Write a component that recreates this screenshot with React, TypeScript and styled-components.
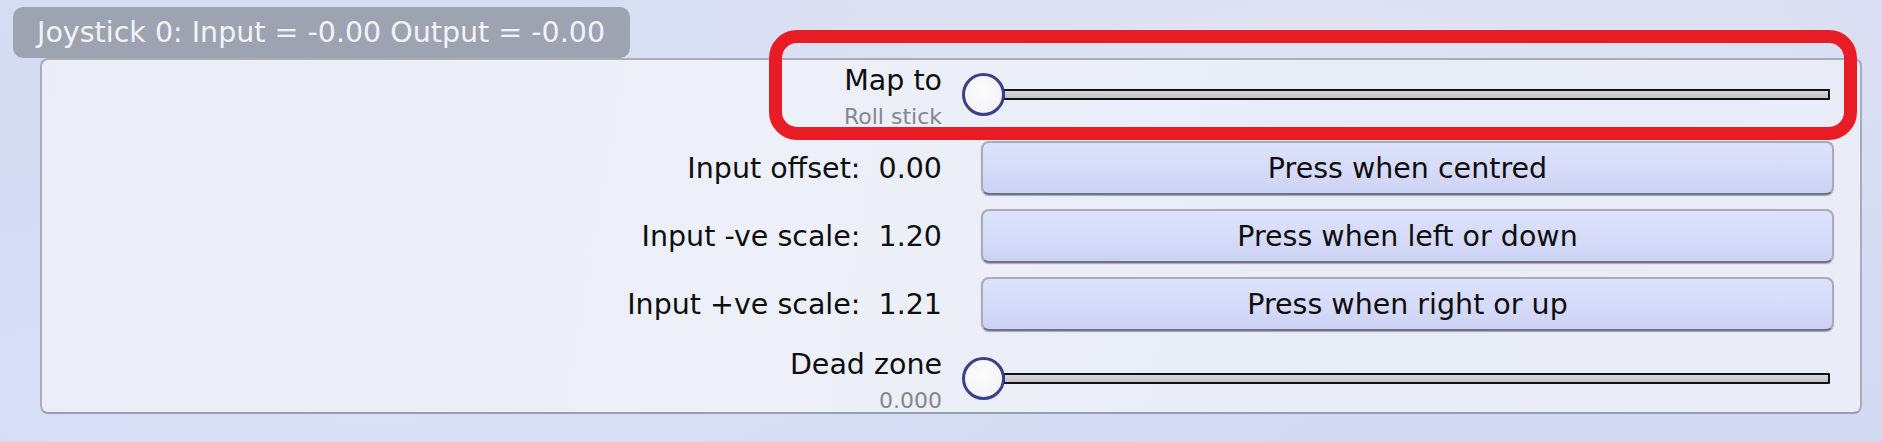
import React, { FC } from 'react';
import styled, { createGlobalStyle } from 'styled-components';

const GlobalStyle = createGlobalStyle`
  html,
  body {
    margin: 0;
    padding: 0;
  }
  body {
    width: 1882px;
    height: 442px;
    overflow: hidden;
    font-family: 'DejaVu Sans', 'Liberation Sans', sans-serif;
    background: radial-gradient(ellipse at 20% 90%, #d9e1f7 0%, rgba(217, 225, 247, 0) 45%),
      radial-gradient(ellipse at 70% 10%, #dfe3f2 0%, rgba(223, 227, 242, 0) 50%),
      linear-gradient(180deg, #d6ddf2 0%, #d3daf1 60%, #d2daf3 100%);
  }
`;

const Page = styled.div`
  position: relative;
  padding: 7px 20px 0 13px;
`;

const TitleTab = styled.div`
  width: 617px;
  height: 51px;
  box-sizing: border-box;
  padding-left: 24px;
  border-radius: 10px;
  background: #9ea3b2;
  color: #f1f3f9;
  font-size: 28.5px;
  line-height: 51px;
  white-space: nowrap;
`;

const Panel = styled.div`
  margin-left: 27px;
  width: 1822px;
  height: 356px;
  box-sizing: border-box;
  padding: 1px 26px 0 0;
  border: 2px solid #a9adba;
  border-bottom-color: #9a9eab;
  border-radius: 8px;
  background: linear-gradient(100deg, #eaedf7 0%, #edf0f8 40%, #e8ecf7 70%, #eaedf7 100%);
  display: grid;
  grid-template-columns: 900px 872px;
  grid-template-rows: 66px 54px 54px 54px 66px;
  column-gap: 20px;
  row-gap: 14px;
`;

const Label = styled.div`
  display: flex;
  align-items: center;
  justify-content: flex-end;
  font-size: 28.5px;
  color: #0e0e0e;
  white-space: pre;
`;

const LabelStack = styled.div`
  display: flex;
  flex-direction: column;
  align-items: flex-end;
  justify-content: center;
  padding-top: 6px;
`;

const LabelMain = styled.div`
  font-size: 28.5px;
  line-height: 33px;
  color: #0e0e0e;
`;

const LabelSub = styled.div`
  margin-top: 6px;
  font-size: 22px;
  line-height: 27px;
  color: #84868e;
`;

const SliderRow = styled.div`
  display: flex;
  align-items: center;
  padding-right: 4px;
`;

const Thumb = styled.div`
  flex: none;
  width: 43px;
  height: 43px;
  box-sizing: border-box;
  border-radius: 50%;
  border: 3px solid #3c3f8a;
  background: radial-gradient(circle at 45% 40%, #fbfbfc 0%, #f2f2f5 100%);
  position: relative;
  z-index: 1;
`;

const Track = styled.div`
  flex: 1;
  height: 11px;
  margin-left: -2px;
  box-sizing: border-box;
  border: 2px solid #111;
  border-radius: 1px;
  background: linear-gradient(180deg, #d8d8dc 0%, #c2c2c7 100%);
`;

const ButtonCell = styled.div`
  display: flex;
  padding-left: 19px;
`;

const Button = styled.button`
  flex: 1;
  height: 54px;
  box-sizing: border-box;
  border: 2px solid #a9abb6;
  border-bottom-color: #6f7282;
  border-radius: 8px;
  background: linear-gradient(180deg, #dde2fc 0%, #d5dbf8 55%, #ccd2f2 100%);
  box-shadow: 0 1px 1px rgba(40, 44, 60, 0.35);
  font-family: 'DejaVu Sans', 'Liberation Sans', sans-serif;
  font-size: 28.5px;
  color: #0e0e0e;
  padding: 0;
  cursor: pointer;
`;

const Highlight = styled.div`
  position: absolute;
  left: 769px;
  top: 30px;
  width: 1088px;
  height: 110px;
  box-sizing: border-box;
  border: 13px solid #e81c25;
  border-radius: 28px;
  pointer-events: none;
`;

const SliderField: FC<{ title: string; sub: string }> = ({ title, sub }) => (
  <>
    <LabelStack>
      <LabelMain>{title}</LabelMain>
      <LabelSub>{sub}</LabelSub>
    </LabelStack>
    <SliderRow>
      <Thumb />
      <Track />
    </SliderRow>
  </>
);

const ButtonField: FC<{ label: string; value: string; action: string }> = ({ label, value, action }) => (
  <>
    <Label>{`${label}  ${value}`}</Label>
    <ButtonCell>
      <Button>{action}</Button>
    </ButtonCell>
  </>
);

const App: FC = () => {
  return (
    <Page>
      <GlobalStyle />
      <TitleTab>Joystick 0: Input = -0.00 Output = -0.00</TitleTab>
      <Panel>
        <SliderField title="Map to" sub="Roll stick" />
        <ButtonField label="Input offset:" value="0.00" action="Press when centred" />
        <ButtonField label="Input -ve scale:" value="1.20" action="Press when left or down" />
        <ButtonField label="Input +ve scale:" value="1.21" action="Press when right or up" />
        <SliderField title="Dead zone" sub="0.000" />
      </Panel>
      <Highlight />
    </Page>
  );
};

export default App;
